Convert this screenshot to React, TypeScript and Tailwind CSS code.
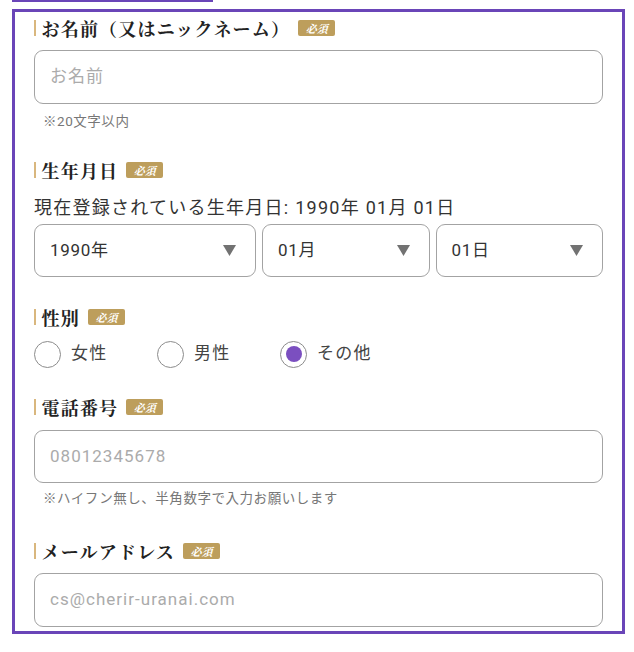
import React from "react";

const LABEL_FONT = { fontFamily: '"Noto Serif CJK JP", "Noto Sans CJK JP", serif' };
const BODY_FONT = { fontFamily: 'Roboto, "Noto Sans CJK JP", sans-serif' };

function Badge() {
  return (
    <span
      className="ml-[8px] inline-flex h-[16px] w-[37px] items-center justify-center rounded-[2px] bg-[#bd9e5c] text-[11px] font-bold italic leading-none text-white"
      style={LABEL_FONT}
    >
      必須
    </span>
  );
}

function Label({ children }: { children: React.ReactNode }) {
  return (
    <div className="flex h-[32px] items-center">
      <span className="h-[16px] w-[1.5px] bg-[#d9b77e]" />
      <span
        className="ml-[6px] text-[18px] font-bold leading-none tracking-[1.2px] text-[#222]"
        style={LABEL_FONT}
      >
        {children}
      </span>
      <Badge />
    </div>
  );
}

function Input({ placeholder, className = "" }: { placeholder: string; className?: string }) {
  return (
    <div
      className={`flex h-[54px] items-center rounded-[9px] border-[1.5px] border-[#a3a3a3] pl-[15px] text-[17px] tracking-[0.06em] text-[#ababab] ${className}`}
    >
      {placeholder}
    </div>
  );
}

function Select({ value }: { value: string }) {
  return (
    <div className="flex h-[53px] items-center justify-between rounded-[9px] border-[1.5px] border-[#a3a3a3] pl-[15px] pr-[19px] text-[17px] tracking-[0.04em] text-[#333]">
      <span>{value}</span>
      <svg width="13" height="11" viewBox="0 0 13 11">
        <polygon points="0,0 13,0 6.5,11" fill="#727272" />
      </svg>
    </div>
  );
}

function Radio({ label, checked = false }: { label: string; checked?: boolean }) {
  return (
    <div className="flex w-[123px] items-center">
      <span className="flex h-[27px] w-[27px] items-center justify-center rounded-full border-[1.5px] border-[#8c8c8c] bg-white">
        {checked && <span className="h-[16px] w-[16px] rounded-full bg-[#7b4fc0]" />}
      </span>
      <span className="ml-[10px] text-[17px] tracking-[0.07em] text-[#444]">{label}</span>
    </div>
  );
}

function Hint({ children }: { children: React.ReactNode }) {
  return (
    <div className="h-[18px] pl-[9px] text-[13.5px] leading-[18px] tracking-[0.04em] text-[#777]">
      {children}
    </div>
  );
}

export default function App() {
  return (
    <div className="w-[634px] min-h-[652px] bg-white" style={BODY_FONT}>
      <div className="ml-[12px] h-[2px] w-[201px] bg-[#6a45b8]" />
      <div className="ml-[12px] mt-[7px] w-[613px] border-[3px] border-[#6a45b8] px-[19px] pb-[4px]">
        <Label>お名前（又はニックネーム）</Label>
        <Input placeholder="お名前" className="mt-[6px]" />
        <div className="mt-[8px]">
          <Hint>※20文字以内</Hint>
        </div>

        <div className="mt-[24px]">
          <Label>生年月日</Label>
        </div>
        <div className="mt-[10px] h-[24px] text-[18px] leading-[24px] tracking-[0.07em] text-[#333]">
          現在登録されている生年月日: 1990年 01月 01日
        </div>
        <div className="mt-[4px] grid grid-cols-[222px_1fr_1fr] gap-[6px]">
          <Select value="1990年" />
          <Select value="01月" />
          <Select value="01日" />
        </div>

        <div className="mt-[24px]">
          <Label>性別</Label>
        </div>
        <div className="mt-[7px] flex h-[28px] items-center">
          <Radio label="女性" />
          <Radio label="男性" />
          <Radio label="その他" checked />
        </div>

        <div className="mt-[23px]">
          <Label>電話番号</Label>
        </div>
        <Input placeholder="08012345678" className="mt-[7px] !h-[53px]" />
        <div className="mt-[6px]">
          <Hint>※ハイフン無し、半角数字で入力お願いします</Hint>
        </div>

        <div className="mt-[28px]">
          <Label>メールアドレス</Label>
        </div>
        <Input placeholder="cs@cherir-uranai.com" className="mt-[6px]" />
      </div>
    </div>
  );
}
